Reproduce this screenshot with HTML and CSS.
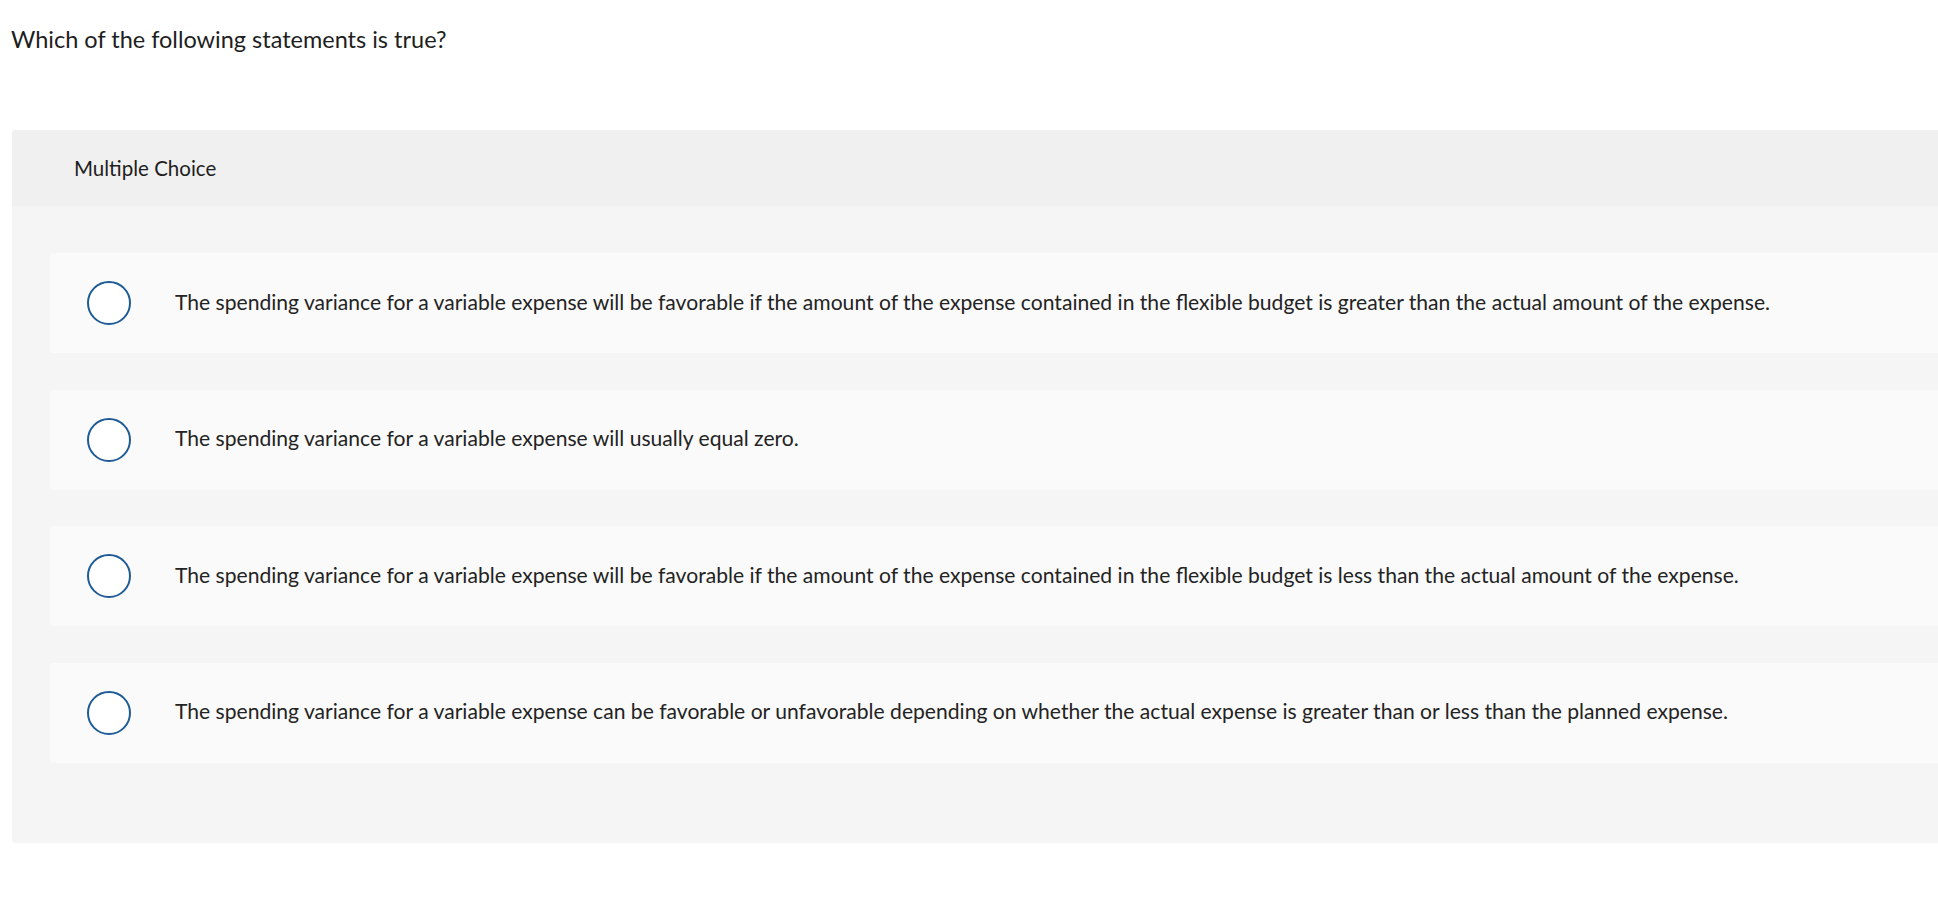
FILE: index.html
```html
<!DOCTYPE html>
<html lang="en">
<head>
<meta charset="utf-8">
<title>Multiple Choice</title>
<link rel="stylesheet" href="styles.css">
</head>
<body>
<h1 class="prompt">Which of the following statements is true?</h1>
<section class="question">
  <header class="question-head">Multiple Choice</header>
  <div class="choices">
    <label class="choice"><span class="radio"></span><span class="choice-text">The spending variance for a variable expense will be favorable if the amount of the expense contained in the flexible budget is greater than the actual amount of the expense.</span></label>
    <label class="choice"><span class="radio"></span><span class="choice-text">The spending variance for a variable expense will usually equal zero.</span></label>
    <label class="choice"><span class="radio"></span><span class="choice-text">The spending variance for a variable expense will be favorable if the amount of the expense contained in the flexible budget is less than the actual amount of the expense.</span></label>
    <label class="choice"><span class="radio"></span><span class="choice-text">The spending variance for a variable expense can be favorable or unfavorable depending on whether the actual expense is greater than or less than the planned expense.</span></label>
  </div>
</section>
</body>
</html>
```
FILE: styles.css
```css
html, body {
  margin: 0;
  padding: 0;
  background: #ffffff;
  overflow: hidden;
}
body {
  font-family: Lato, "Open Sans", sans-serif;
  color: #232323;
  width: 1938px;
  height: 904px;
}
.prompt {
  margin: 25px 0 0 11px;
  font-size: 23.5px;
  line-height: 1.2;
  font-weight: 400;
  color: #1e1e1e;
}
.question {
  margin: 77px 0 0 12px;
  width: 2000px;
  background: #f5f5f5;
  border-radius: 4px;
  overflow: hidden;
}
.question-head {
  height: 76px;
  display: flex;
  align-items: center;
  padding-left: 62px;
  background: #f0f0f0;
  font-size: 20.5px;
  color: #1e1e1e;
}
.choices {
  display: flex;
  flex-direction: column;
  gap: 36.5px;
  padding: 47px 0 80px 38px;
}
.choice {
  display: flex;
  align-items: center;
  height: 100px;
  padding-left: 37px;
  background: #fafafa;
  border-radius: 4px;
}
.radio {
  flex: none;
  width: 44px;
  height: 44px;
  box-sizing: border-box;
  border: 2.5px solid #1f5b94;
  border-radius: 50%;
  background: #ffffff;
  margin-right: 44px;
}
.choice-text {
  font-size: 21.1px;
  color: #232323;
  padding-bottom: 4px;
}
```
